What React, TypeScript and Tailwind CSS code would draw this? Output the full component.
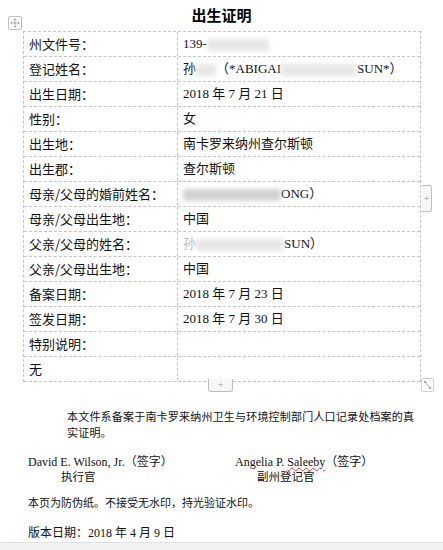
import React from 'react';
import { Move } from 'lucide-react';

const cjk = { fontFamily: '"Noto Sans CJK SC", "Noto Sans", sans-serif' };
const serif = { fontFamily: '"Liberation Serif", "Noto Sans CJK SC", serif' };

function Blur({ w, dark = false }: { w: number; dark?: boolean }) {
    return (
        <span
            className={`inline-block h-[12px] align-middle blur-[2.5px] ${dark ? 'bg-[#d2d2d2]' : 'bg-[#e6e6e6]'}`}
            style={{ width: w }}
        />
    );
}

const rows: { label: string; value: React.ReactNode }[] = [
    { label: '州文件号：', value: <>139-<Blur w={62} /></> },
    {
        label: '登记姓名：',
        value: <>孙<Blur w={20} />（*ABIGAI<Blur w={76} />SUN*）</>,
    },
    { label: '出生日期：', value: '2018 年 7 月 21 日' },
    { label: '性别：', value: '女' },
    { label: '出生地：', value: '南卡罗来纳州查尔斯顿' },
    { label: '出生郡：', value: '查尔斯顿' },
    { label: '母亲/父母的婚前姓名：', value: <><Blur w={98} dark />ONG）</> },
    { label: '母亲/父母出生地：', value: '中国' },
    { label: '父亲/父母的姓名：', value: <><span className="text-[#bbb]">孙</span><Blur w={88} />SUN）</> },
    { label: '父亲/父母出生地：', value: '中国' },
    { label: '备案日期：', value: '2018 年 7 月 23 日' },
    { label: '签发日期：', value: '2018 年 7 月 30 日' },
    { label: '特别说明：', value: '' },
    { label: '无', value: '' },
];

export default function App() {
    return (
        <div className="relative w-[443px] h-[550px] bg-white overflow-hidden text-[#111]" style={serif}>
            <h1 className="h-[31px] flex items-center justify-center text-[15px] font-bold text-black" style={cjk}>
                出生证明
            </h1>

            {/* table */}
            <div className="ml-[23px] w-[398px] border border-b-0 border-dashed border-[#c4c4c4]">
                {rows.map((row) => (
                    <div
                        key={row.label}
                        className="grid grid-cols-[154px_1fr] h-[25px] border-b border-dashed border-[#c4c4c4] text-[13px] leading-[24px]"
                    >
                        <div className="pl-[5px] border-r border-dashed border-[#c4c4c4] whitespace-nowrap" style={cjk}>
                            {row.label}
                        </div>
                        <div className="pl-[5px] whitespace-nowrap">{row.value}</div>
                    </div>
                ))}
            </div>

            <p className="mt-[26px] ml-[67px] w-[354px] text-[11px] leading-[16px] tracking-[0.2px]" style={cjk}>
                本文件系备案于南卡罗来纳州卫生与环境控制部门人口记录处档案的真实证明。
            </p>

            <div className="mt-[15px] ml-[28px] flex text-[12px] leading-[14px]">
                <div className="w-[207px]">
                    <div className="h-[14px]">David E. Wilson, Jr.（签字）</div>
                    <div className="pl-[33px] h-[14px] text-[11.5px]" style={cjk}>执行官</div>
                </div>
                <div>
                    <div className="h-[14px]">
                        Angelia P. <span className="underline decoration-wavy decoration-red-500 decoration-1 underline-offset-1">Saleeby</span>（签字）
                    </div>
                    <div className="pl-[22px] h-[14px] text-[11.5px]" style={cjk}>副州登记官</div>
                </div>
            </div>

            <p className="mt-[12px] ml-[28px] text-[11px] leading-[14px]" style={cjk}>
                本页为防伪纸。不接受无水印，持光验证水印。
            </p>

            <p className="mt-[17px] ml-[28px] text-[12px] leading-[14px]">版本日期：2018 年 4 月 9 日</p>

            {/* editor chrome overlays */}
            <div className="absolute left-[8px] top-[16px] w-[14px] h-[14px] border border-[#bdbdbd] rounded-[2px] bg-white flex items-center justify-center text-[#888]">
                <Move size={10} strokeWidth={1.5} />
            </div>
            <div className="absolute left-[422px] top-[185px] w-[10px] h-[27px] border border-l-0 border-[#bdbdbd] rounded-r-[3px] bg-[#f7f7f7] flex items-center justify-center text-[10px] text-[#999]">
                +
            </div>
            <div className="absolute left-[208px] top-[379px] w-[25px] h-[13px] border border-t-0 border-[#bdbdbd] rounded-b-[3px] bg-[#f7f7f7] flex items-center justify-center text-[10px] leading-none text-[#999]">
                +
            </div>
            <div className="absolute left-[421px] top-[378px] w-[13px] h-[14px] border border-[#d0d0d0] rounded-[2px] bg-white">
                <svg width="11" height="12" viewBox="0 0 11 12" className="text-[#777]">
                    <path d="M2 2h2v2H2zM7 8h2v2H7z" fill="currentColor" opacity="0.6" />
                    <path d="M3 3l5 6" stroke="currentColor" strokeWidth="0.6" />
                </svg>
            </div>
            <div className="absolute left-0 right-0 bottom-0 h-[8px] bg-[#f2f2f2] border-t border-[#e2e2e2]" />
        </div>
    );
}
